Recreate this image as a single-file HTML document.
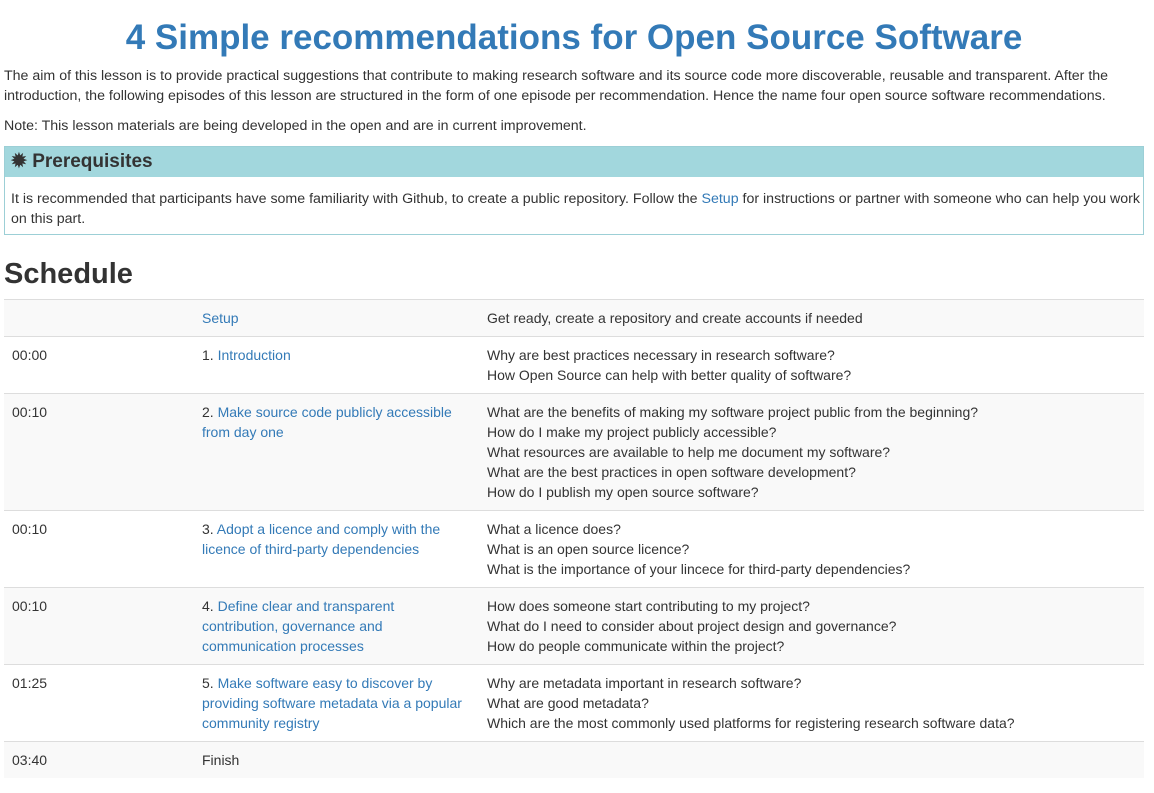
<!DOCTYPE html>
<html><head><meta charset="utf-8"><style>
body{margin:0;padding:0 10px 0 4px;width:1140px;font-family:"Liberation Sans",Arial,sans-serif;font-size:14.2px;line-height:20px;color:#333;background:#fff}
a{color:#337ab7;text-decoration:none}
h1{margin:0;padding-top:17px;height:42px;text-align:center;color:#337ab7;font-size:35px;line-height:42px;font-weight:bold}
p{margin:0}
.p1{margin-top:7px}
.p2{margin-top:10px}
.box{margin-top:10px;border:1px solid #9ccfd6;height:87px;overflow:hidden}
.box .hd{background:#a2d7dd;height:30px;line-height:30px;font-size:19px;font-weight:bold;padding-left:6px;color:#333}
.box .bd{padding:12px 0 0 6px;font-size:14.2px;line-height:20px;white-space:nowrap}
h2{margin:0;margin-top:22px;font-size:29px;line-height:34px;font-weight:bold;height:42px}
table{border-collapse:collapse;width:1140px;table-layout:fixed;font-size:14px}
td{padding:8px;border-top:1px solid #ddd;vertical-align:top;line-height:20px}
tr:nth-child(odd){background:#f9f9f9}
</style></head><body>
<h1>4 Simple recommendations for Open Source Software</h1>
<p class="p1">The aim of this lesson is to provide practical suggestions that contribute to making research software and its source code more discoverable, reusable and transparent. After the introduction, the following episodes of this lesson are structured in the form of one episode per recommendation. Hence the name four open source software recommendations.</p>
<p class="p2">Note: This lesson materials are being developed in the open and are in current improvement.</p>
<div class="box"><div class="hd">✹ Prerequisites</div><div class="bd">It is recommended that participants have some familiarity with Github, to create a public repository. Follow the <a>Setup</a> for instructions or partner with someone who can help you work<br>on this part.</div></div>
<h2>Schedule</h2>
<table>
<colgroup><col style="width:190px"><col style="width:285px"><col></colgroup>
<tr><td></td><td><a>Setup</a></td><td>Get ready, create a repository and create accounts if needed</td></tr>
<tr><td>00:00</td><td>1. <a>Introduction</a></td><td>Why are best practices necessary in research software?<br>How Open Source can help with better quality of software?</td></tr>
<tr><td>00:10</td><td>2. <a>Make source code publicly accessible from day one</a></td><td>What are the benefits of making my software project public from the beginning?<br>How do I make my project publicly accessible?<br>What resources are available to help me document my software?<br>What are the best practices in open software development?<br>How do I publish my open source software?</td></tr>
<tr><td>00:10</td><td>3. <a>Adopt a licence and comply with the licence of third-party dependencies</a></td><td>What a licence does?<br>What is an open source licence?<br>What is the importance of your lincece for third-party dependencies?</td></tr>
<tr><td>00:10</td><td>4. <a>Define clear and transparent contribution, governance and communication processes</a></td><td>How does someone start contributing to my project?<br>What do I need to consider about project design and governance?<br>How do people communicate within the project?</td></tr>
<tr><td>01:25</td><td>5. <a>Make software easy to discover by providing software metadata via a popular community registry</a></td><td>Why are metadata important in research software?<br>What are good metadata?<br>Which are the most commonly used platforms for registering research software data?</td></tr>
<tr><td>03:40</td><td>Finish</td><td></td></tr>
</table>
</body></html>
